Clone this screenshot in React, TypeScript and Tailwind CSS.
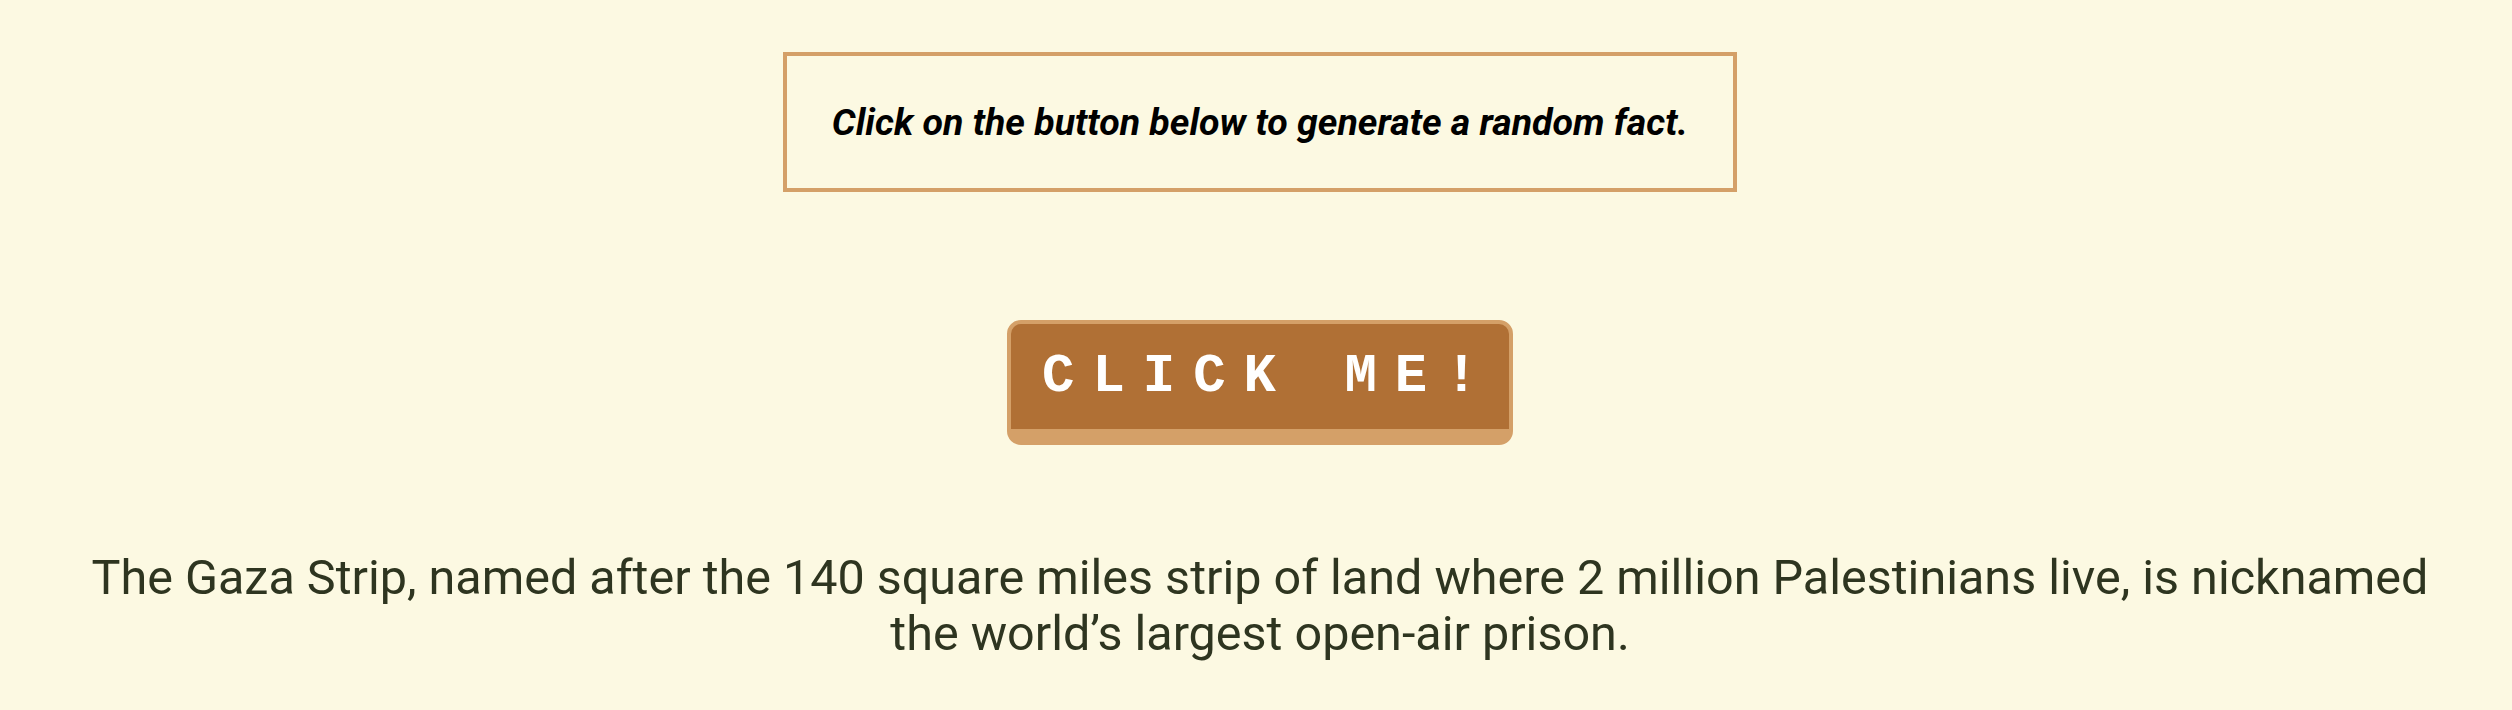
import React from 'react';

const fact =
  'The Gaza Strip, named after the 140 square miles strip of land where 2 million Palestinians live, is nicknamed the world\u2019s largest open-air prison.';

export default function App() {
  return (
    <div className="min-h-screen bg-[#fcf9e2] flex flex-col items-center pt-[52px] pl-2 font-['Roboto',sans-serif]">
      <div className="w-[954px] h-[140px] border-4 border-[#d4a068] flex items-center justify-center">
        <p className="italic font-bold text-[37.5px] text-black">
          Click on the button below to generate a random fact.
        </p>
      </div>

      <button className="mt-[128px] w-[506px] h-[125px] rounded-[14px] border-4 border-b-[16px] border-[#d4a068] bg-[#b07035] flex items-center pl-[31px] text-white font-['Liberation_Mono',monospace] font-bold text-[54px] tracking-[18px]">
        CLICK ME!
      </button>

      <p className="mt-[105px] max-w-[2370px] text-center text-[48.5px] leading-[56px] text-[#2e3520]">
        {fact}
      </p>
    </div>
  );
}
